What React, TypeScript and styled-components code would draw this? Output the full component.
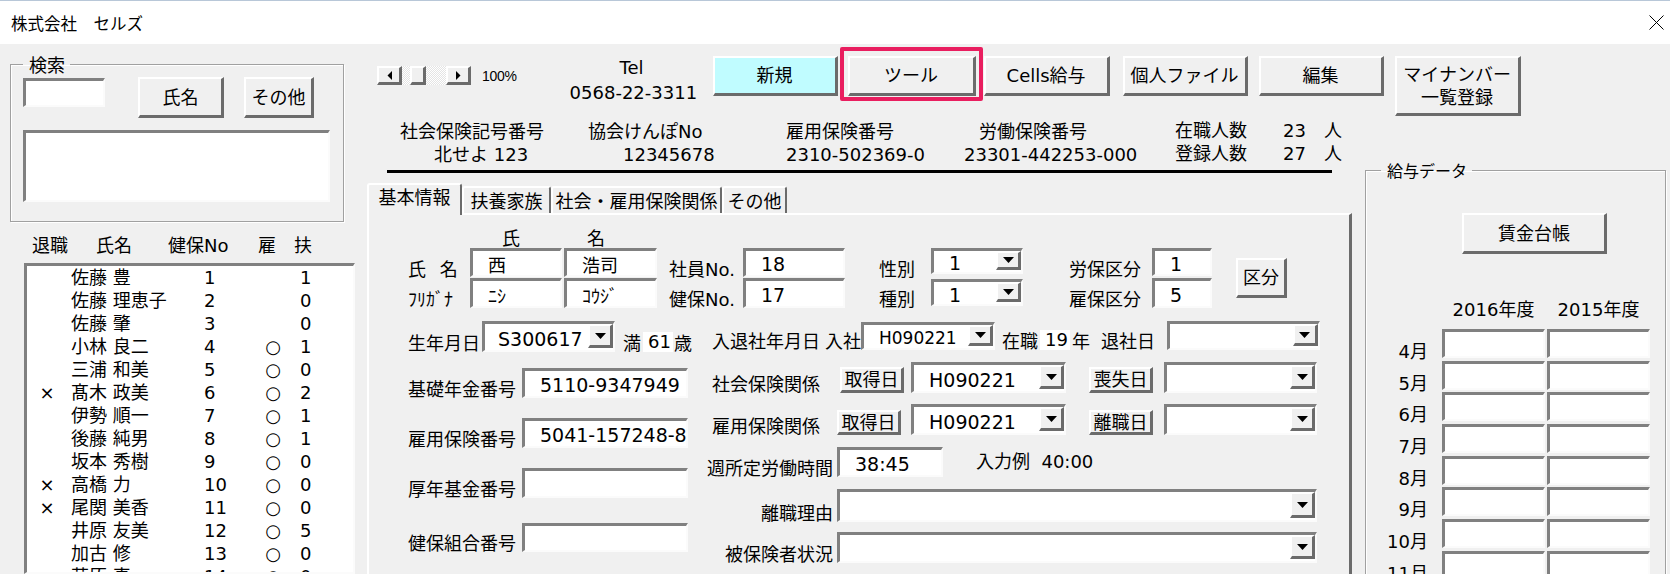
import React from 'react';
import styled, { createGlobalStyle, css } from 'styled-components';

const GlobalStyle = createGlobalStyle`
  * { box-sizing: border-box; }
  html, body { margin: 0; padding: 0; background: #f0f0f0; }
  body {
    font-family: "DejaVu Sans", "Noto Sans CJK JP", sans-serif;
    color: #000;
  }
`;

const raised = css`
  background: #f0f0f0;
  border-style: solid;
  border-width: 2px 3px 3px 2px;
  border-color: #ffffff #6b6b6b #6b6b6b #ffffff;
`;

const sunken = css`
  background: #fff;
  border-style: solid;
  border-width: 3px 2px 2px 3px;
  border-color: #808080 #fbfbfb #fbfbfb #808080;
`;

const Window = styled.div`
  width: 1670px;
  height: 574px;
  overflow: hidden;
  display: flex;
  flex-direction: column;
  background: #f0f0f0;
`;

const TitleBar = styled.header`
  flex: none;
  height: 44px;
  background: #fff;
  border-top: 1px solid #b8c7d8;
  display: flex;
  align-items: center;
  justify-content: space-between;
  padding: 0 6px 0 11px;
`;

const Title = styled.h1`
  margin: 0;
  font-family: "Noto Sans CJK JP", sans-serif;
  font-weight: 400;
  font-size: 16.5px;
  line-height: 20px;
`;

const Body = styled.div`
  flex: 1;
  display: flex;
  min-height: 0;
`;

/* ---------- left pane ---------- */

const LeftPane = styled.aside`
  flex: none;
  width: 360px;
  padding: 10px 0 0 10px;
  display: flex;
  flex-direction: column;
  min-height: 0;
`;

const GroupBox = styled.fieldset<{ $w: number }>`
  margin: 0;
  min-width: 0;
  width: ${p => p.$w}px;
  border: 1px solid #a0a0a0;
  box-shadow: inset 1px 1px 0 #fff, 1px 1px 0 #fff;
`;

const SearchGroup = styled(GroupBox)`
  flex: none;
  padding: 3px 0 19px 12px;
`;

const Legend = styled.legend<{ $size: number; $ml?: number }>`
  margin-left: ${p => p.$ml ?? 0}px;
  padding: 0 5px 0 6px;
  font-family: "Noto Sans CJK JP", sans-serif;
  font-size: ${p => p.$size}px;
  line-height: 20px;
`;

const SearchRow = styled.div`
  display: flex;
  align-items: flex-start;
`;

const Field = styled.div<{ $w: number; $h: number; $ml?: number; $mt?: number; $size?: number }>`
  ${sunken};
  flex: none;
  width: ${p => p.$w}px;
  height: ${p => p.$h}px;
  margin-left: ${p => p.$ml ?? 0}px;
  margin-top: ${p => p.$mt ?? 0}px;
  padding: 2px 0 0 15px;
  display: flex;
  align-items: center;
  font-size: ${p => p.$size ?? 19}px;
  white-space: nowrap;
  overflow: hidden;
`;

const Button = styled.button<{ $w: number; $h: number; $ml?: number; $mt?: number; $bg?: string }>`
  ${raised};
  flex: none;
  width: ${p => p.$w}px;
  height: ${p => p.$h}px;
  margin: ${p => p.$mt ?? 0}px 0 0 ${p => p.$ml ?? 0}px;
  padding: 0;
  background: ${p => p.$bg ?? '#f0f0f0'};
  font-family: inherit;
  font-size: 18px;
  line-height: 23px;
  color: #000;
  display: flex;
  flex-direction: column;
  align-items: center;
  justify-content: center;
  cursor: default;
`;

const ListHeader = styled.div`
  display: grid;
  grid-template-columns: 22px 64px 72px 90px 36px auto;
  margin-top: 13px;
  font-size: 18px;
  line-height: 22px;
`;

const ListBox = styled.div`
  ${sunken};
  flex: 1;
  width: 331px;
  margin: 6px 0 0 14px;
  overflow: hidden;
`;

const ListRow = styled.div`
  display: grid;
  grid-template-columns: 44px 133px 58px 22px auto;
  height: 23px;
  font-size: 18px;
  line-height: 23px;
  white-space: nowrap;
`;

const Mark = styled.span`
  text-align: center;
  padding-right: 4px;
`;

const Circle = styled.span`
  text-align: center;
`;

const FuCell = styled.span`
  padding-left: 16px;
`;

/* ---------- main ---------- */

const Main = styled.main`
  flex: 1;
  display: flex;
  flex-direction: column;
  min-width: 0;
`;

const Toolbar = styled.div`
  flex: none;
  height: 76px;
  display: flex;
  align-items: flex-start;
`;

const ScrollBar = styled.div`
  margin: 22px 0 0 17px;
  width: 94px;
  height: 19px;
  display: flex;
  background-image: repeating-conic-gradient(#ffffff 0 25%, #e4e4e4 0 50%);
  background-size: 2px 2px;
`;

const ScrollArrow = styled.span`
  ${raised};
  width: 25px;
  height: 19px;
  display: flex;
  align-items: center;
  justify-content: center;
`;

const ScrollTrack = styled.span`
  flex: 1;
`;

const ScrollThumb = styled.span`
  ${raised};
  display: block;
  width: 16px;
  height: 19px;
  margin-left: 8px;
`;

const ZoomText = styled.span`
  margin: 22px 0 0 11px;
  font-family: "Liberation Sans", sans-serif;
  font-size: 14px;
  line-height: 20px;
  letter-spacing: -0.3px;
`;

const TelBlock = styled.div`
  width: 124px;
  margin: 11px 0 0 53px;
  text-align: center;
  font-size: 18px;
  line-height: 25px;
  white-space: nowrap;
`;

const Highlight = styled.div`
  position: relative;
  margin: 12px 0 0 10px;
  &::after {
    content: '';
    position: absolute;
    top: -9px;
    left: -8px;
    right: -7px;
    bottom: -5px;
    border: 4px solid #e91e5f;
    border-radius: 2px;
    pointer-events: none;
  }
`;

const Lower = styled.div`
  flex: 1;
  display: flex;
  min-height: 0;
`;

const CenterCol = styled.div`
  flex: none;
  width: 992px;
  display: flex;
  flex-direction: column;
`;

const InfoRow = styled.div`
  display: flex;
  height: 46px;
  margin-left: 27px;
`;

const InfoCol = styled.div<{ $w: number }>`
  width: ${p => p.$w}px;
  display: flex;
  flex-direction: column;
`;

const InfoText = styled.div<{ $pad: number }>`
  padding-left: ${p => p.$pad}px;
  font-size: 18px;
  line-height: 23px;
  white-space: nowrap;
`;

const CountGrid = styled.div`
  margin-left: 15px;
  display: grid;
  grid-template-columns: 108px 41px auto;
  font-size: 18px;
  line-height: 21px;
  white-space: nowrap;
`;

const Rule = styled.div`
  width: 945px;
  height: 3px;
  margin: 4px 0 0 27px;
  background: #000;
`;

const TabStrip = styled.div`
  display: flex;
  align-items: flex-end;
  height: 30px;
  margin: 10px 0 0 7px;
`;

const Tab = styled.div<{ $w: number; $active?: boolean }>`
  position: relative;
  z-index: ${p => (p.$active ? 2 : 0)};
  width: ${p => p.$w}px;
  height: ${p => (p.$active ? 32 : 27)}px;
  margin-bottom: ${p => (p.$active ? -2 : 0)}px;
  padding: ${p => (p.$active ? '0 0 4px' : '3px 0 0')};
  background: #f0f0f0;
  border-style: solid;
  border-width: 2px 2px 0 2px;
  border-color: #fff #6b6b6b #fff #fff;
  border-radius: 3px 3px 0 0;
  display: flex;
  align-items: center;
  justify-content: center;
  font-size: 18px;
  line-height: 22px;
  white-space: nowrap;
`;

const Panel = styled.section`
  flex: 1;
  width: 985px;
  margin-left: 7px;
  border-style: solid;
  border-width: 2px 3px 0 2px;
  border-color: #fff #6b6b6b #fff #fff;
  padding: 14px 0 0 39px;
`;

const TopGrid = styled.div`
  display: grid;
  grid-template-columns: 62px 94px 93px 86px 102px 86px 92px 129px 60px 75px;
  grid-template-rows: 19px 30px 30px;
`;

const ColHead = styled.span<{ $pad: number }>`
  padding-left: ${p => p.$pad}px;
  font-size: 18px;
  line-height: 19px;
`;

const Label = styled.span<{ $ml?: number; $pad?: number; $w?: number; $right?: boolean }>`
  flex: none;
  margin-left: ${p => p.$ml ?? 0}px;
  margin-bottom: -3px;
  padding-left: ${p => p.$pad ?? 0}px;
  padding-right: ${p => (p.$right ? 4 : 0)}px;
  width: ${p => (p.$w ? `${p.$w}px` : 'auto')};
  text-align: ${p => (p.$right ? 'right' : 'left')};
  font-size: 18px;
  line-height: 22px;
  white-space: nowrap;
  align-self: end;
`;

const NameLabel = styled(Label)`
  word-spacing: 8px;
`;

const KubunButton = styled(Button)`
  grid-column: 10;
  grid-row: 2 / 4;
  justify-self: end;
  align-self: center;
`;

const Select = styled.div<{ $w: number; $h: number; $ml?: number; $mt?: number }>`
  ${sunken};
  flex: none;
  width: ${p => p.$w}px;
  height: ${p => p.$h}px;
  margin-left: ${p => p.$ml ?? 0}px;
  margin-top: ${p => p.$mt ?? 0}px;
  display: flex;
  align-items: flex-start;
`;

const SelectValue = styled.span<{ $size?: number; $pad?: number }>`
  flex: 1;
  align-self: center;
  padding: 3px 0 0 ${p => p.$pad ?? 15}px;
  font-size: ${p => p.$size ?? 19}px;
  line-height: 20px;
  white-space: nowrap;
  overflow: hidden;
`;

const DropButton = styled.span`
  ${raised};
  flex: none;
  width: 25px;
  height: calc(100% - 2px);
  display: flex;
  align-items: center;
  justify-content: center;
`;

const Years = styled.span`
  flex: none;
  margin-left: 2px;
  padding: 0 2px 0 5px;
  background: #fff;
  font-size: 18px;
  line-height: 20px;
`;

const LowerBlock = styled.div`
  display: flex;
  margin-top: 13px;
`;

const LeftForm = styled.div`
  flex: none;
  width: 297px;
  display: flex;
  flex-direction: column;
`;

const RightForm = styled.div`
  display: flex;
  flex-direction: column;
`;

const FormRow = styled.div<{ $mt?: number }>`
  display: flex;
  align-items: flex-end;
  margin-top: ${p => p.$mt ?? 0}px;
`;

const Note = styled.span`
  align-self: center;
  margin-left: 33px;
  font-size: 18px;
  line-height: 22px;
  white-space: pre;
`;

/* ---------- side ---------- */

const Side = styled.aside`
  flex: none;
  width: 301px;
  margin-left: 13px;
  padding-top: 40px;
`;

const PayGroup = styled(GroupBox)`
  padding: 0 0 20px 0;
`;

const YearGrid = styled.div<{ $mt: number }>`
  display: grid;
  grid-template-columns: 74px 103px 103px;
  column-gap: 2px;
  row-gap: 2.67px;
  margin-top: ${p => p.$mt}px;
`;

const YearHead = styled.span`
  text-align: center;
  font-size: 18px;
  line-height: 22px;
  white-space: nowrap;
`;

const MonthLabel = styled.span`
  align-self: end;
  margin-bottom: -5px;
  padding-right: 12px;
  text-align: right;
  font-size: 18px;
  line-height: 22px;
`;

const Cell = styled.div`
  ${sunken};
  height: 29px;
`;

/* ---------- icons ---------- */

const CloseIcon = () => (
  <svg width="15" height="15" viewBox="0 0 15 15">
    <path d="M0.5 0.5 L14.5 14.5 M14.5 0.5 L0.5 14.5" stroke="#000" strokeWidth="1" fill="none" />
  </svg>
);

const ArrowLeft = () => (
  <svg width="5" height="9" viewBox="0 0 5 9">
    <polygon points="5,0 5,9 0.5,4.5" fill="#000" />
  </svg>
);

const ArrowRight = () => (
  <svg width="5" height="9" viewBox="0 0 5 9">
    <polygon points="0,0 0,9 4.5,4.5" fill="#000" />
  </svg>
);

const ArrowDown = () => (
  <svg width="11" height="6" viewBox="0 0 11 6">
    <polygon points="0,0 11,0 5.5,6" fill="#000" />
  </svg>
);

const Dropdown: React.FC<{ w: number; h: number; ml?: number; mt?: number; value?: string; size?: number; pad?: number }> = ({
  w, h, ml, mt, value, size, pad,
}) => (
  <Select $w={w} $h={h} $ml={ml} $mt={mt}>
    <SelectValue $size={size} $pad={pad}>{value}</SelectValue>
    <DropButton><ArrowDown /></DropButton>
  </Select>
);

/* ---------- data ---------- */

const staff = [
  { x: '', name: '佐藤 豊', no: 1, koyo: '', fu: 1 },
  { x: '', name: '佐藤 理恵子', no: 2, koyo: '', fu: 0 },
  { x: '', name: '佐藤 肇', no: 3, koyo: '', fu: 0 },
  { x: '', name: '小林 良二', no: 4, koyo: '○', fu: 1 },
  { x: '', name: '三浦 和美', no: 5, koyo: '○', fu: 0 },
  { x: '×', name: '髙木 政美', no: 6, koyo: '○', fu: 2 },
  { x: '', name: '伊勢 順一', no: 7, koyo: '○', fu: 1 },
  { x: '', name: '後藤 純男', no: 8, koyo: '○', fu: 1 },
  { x: '', name: '坂本 秀樹', no: 9, koyo: '○', fu: 0 },
  { x: '×', name: '高橋 力', no: 10, koyo: '○', fu: 0 },
  { x: '×', name: '尾関 美香', no: 11, koyo: '○', fu: 0 },
  { x: '', name: '井原 友美', no: 12, koyo: '○', fu: 5 },
  { x: '', name: '加古 修', no: 13, koyo: '○', fu: 0 },
  { x: '', name: '荻原 真', no: 14, koyo: '○', fu: 0 },
];

const months = ['4月', '5月', '6月', '7月', '8月', '9月', '10月', '11月', '12月', '1月', '2月', '3月'];

export default function App() {
  return (
    <Window>
      <GlobalStyle />
      <TitleBar>
        <Title>株式会社　セルズ</Title>
        <CloseIcon />
      </TitleBar>

      <Body>
        <LeftPane>
          <SearchGroup $w={334}>
            <Legend $size={18}>検索</Legend>
            <SearchRow>
              <Field $w={82} $h={29} $mt={1} />
              <Button $w={86} $h={41} $ml={33}>氏名</Button>
              <Button $w={70} $h={41} $ml={20}>その他</Button>
            </SearchRow>
            <Field $w={307} $h={72} $mt={12} />
          </SearchGroup>

          <ListHeader>
            <span />
            <span>退職</span>
            <span>氏名</span>
            <span>健保No</span>
            <span>雇</span>
            <span>扶</span>
          </ListHeader>
          <ListBox>
            {staff.map(s => (
              <ListRow key={s.no}>
                <Mark>{s.x}</Mark>
                <span>{s.name}</span>
                <span>{s.no}</span>
                <Circle>{s.koyo}</Circle>
                <FuCell>{s.fu}</FuCell>
              </ListRow>
            ))}
          </ListBox>
        </LeftPane>

        <Main>
          <Toolbar>
            <ScrollBar>
              <ScrollArrow><ArrowLeft /></ScrollArrow>
              <ScrollTrack><ScrollThumb /></ScrollTrack>
              <ScrollArrow><ArrowRight /></ScrollArrow>
            </ScrollBar>
            <ZoomText>100%</ZoomText>
            <TelBlock>
              <div>Tel</div>
              <div>0568-22-3311</div>
            </TelBlock>
            <Button $w={125} $h={40} $ml={19} $mt={12} $bg="#c0fcff">新規</Button>
            <Highlight>
              <Button $w={128} $h={40}>ツール</Button>
            </Highlight>
            <Button $w={126} $h={40} $ml={8} $mt={12}>Cells給与</Button>
            <Button $w={125} $h={40} $ml={13} $mt={12}>個人ファイル</Button>
            <Button $w={125} $h={40} $ml={11} $mt={12}>編集</Button>
            <Button $w={126} $h={60} $ml={11} $mt={12}>
              <span>マイナンバー</span>
              <span>一覧登録</span>
            </Button>
          </Toolbar>

          <Lower>
            <CenterCol>
              <InfoRow>
                <InfoCol $w={173}>
                  <InfoText $pad={13}>社会保険記号番号</InfoText>
                  <InfoText $pad={47}>北せよ 123</InfoText>
                </InfoCol>
                <InfoCol $w={200}>
                  <InfoText $pad={28}>協会けんぽNo</InfoText>
                  <InfoText $pad={63}>12345678</InfoText>
                </InfoCol>
                <InfoCol $w={190}>
                  <InfoText $pad={26}>雇用保険番号</InfoText>
                  <InfoText $pad={26}>2310-502369-0</InfoText>
                </InfoCol>
                <InfoCol $w={210}>
                  <InfoText $pad={29}>労働保険番号</InfoText>
                  <InfoText $pad={14}>23301-442253-000</InfoText>
                </InfoCol>
                <CountGrid>
                  <span>在職人数</span><span>23</span><span>人</span>
                  <span>登録人数</span><span>27</span><span>人</span>
                </CountGrid>
              </InfoRow>
              <Rule />

              <TabStrip>
                <Tab $w={95} $active>基本情報</Tab>
                <Tab $w={89}>扶養家族</Tab>
                <Tab $w={171}>社会・雇用保険関係</Tab>
                <Tab $w={65}>その他</Tab>
              </TabStrip>

              <Panel>
                <TopGrid>
                  <span />
                  <ColHead $pad={32}>氏</ColHead>
                  <ColHead $pad={23}>名</ColHead>
                  <span /><span /><span /><span /><span /><span /><span />

                  <NameLabel>氏 名</NameLabel>
                  <Field $w={92} $h={29} $size={18}>西</Field>
                  <Field $w={93} $h={29} $size={18}>浩司</Field>
                  <Label $pad={12}>社員No.</Label>
                  <Field $w={102} $h={29}>18</Field>
                  <Label $pad={34}>性別</Label>
                  <Dropdown w={92} h={26} value="1" />
                  <Label $pad={46}>労保区分</Label>
                  <Field $w={60} $h={28}>1</Field>
                  <KubunButton $w={51} $h={40}>区分</KubunButton>

                  <Label>ﾌﾘｶﾞﾅ</Label>
                  <Field $w={92} $h={30} $size={18}>ﾆｼ</Field>
                  <Field $w={93} $h={30} $size={18}>ｺｳｼﾞ</Field>
                  <Label $pad={12}>健保No.</Label>
                  <Field $w={102} $h={30}>17</Field>
                  <Label $pad={34}>種別</Label>
                  <Dropdown w={92} h={27} mt={1} value="1" />
                  <Label $pad={46}>雇保区分</Label>
                  <Field $w={60} $h={30}>5</Field>
                </TopGrid>

                <LowerBlock>
                  <LeftForm>
                    <FormRow>
                      <Label>生年月日</Label>
                      <Dropdown w={133} h={31} ml={2} value="S300617" pad={13} />
                      <Label $ml={8}>満</Label>
                      <Years>61</Years>
                      <Label $ml={1}>歳</Label>
                    </FormRow>
                    <FormRow $mt={16}>
                      <Label $w={114}>基礎年金番号</Label>
                      <Field $w={166} $h={30}>5110-9347949</Field>
                    </FormRow>
                    <FormRow $mt={20}>
                      <Label $w={114}>雇用保険番号</Label>
                      <Field $w={166} $h={30}>5041-157248-8</Field>
                    </FormRow>
                    <FormRow $mt={20}>
                      <Label $w={114}>厚年基金番号</Label>
                      <Field $w={166} $h={30} />
                    </FormRow>
                    <FormRow $mt={25}>
                      <Label $w={114}>健保組合番号</Label>
                      <Field $w={166} $h={29} />
                    </FormRow>
                  </LeftForm>

                  <RightForm>
                    <FormRow>
                      <Label $ml={7}>入退社年月日</Label>
                      <Label $ml={5}>入社</Label>
                      <Dropdown w={134} h={28} value="H090221" size={17} />
                      <Label $ml={7}>在職</Label>
                      <Years>19</Years>
                      <Label $ml={2}>年</Label>
                      <Label $ml={11}>退社日</Label>
                      <Dropdown w={153} h={29} ml={12} />
                    </FormRow>
                    <FormRow $mt={12}>
                      <Label $w={132} $pad={7}>社会保険関係</Label>
                      <Button $w={64} $h={26} $ml={3}>取得日</Button>
                      <Dropdown w={155} h={31} ml={7} value="H090221" />
                      <Button $w={64} $h={26} $ml={23}>喪失日</Button>
                      <Dropdown w={153} h={31} ml={11} />
                    </FormRow>
                    <FormRow $mt={11}>
                      <Label $w={132} $pad={7}>雇用保険関係</Label>
                      <Button $w={64} $h={25}>取得日</Button>
                      <Dropdown w={155} h={31} ml={10} value="H090221" />
                      <Button $w={64} $h={25} $ml={23}>離職日</Button>
                      <Dropdown w={153} h={31} ml={11} />
                    </FormRow>
                    <FormRow $mt={12}>
                      <Label $w={132} $right>週所定労働時間</Label>
                      <Field $w={106} $h={30}>38:45</Field>
                      <Note>{'入力例  40:00'}</Note>
                    </FormRow>
                    <FormRow $mt={12}>
                      <Label $w={132} $right>離職理由</Label>
                      <Dropdown w={480} h={33} />
                    </FormRow>
                    <FormRow $mt={10}>
                      <Label $w={132} $right>被保険者状況</Label>
                      <Dropdown w={480} h={31} />
                    </FormRow>
                  </RightForm>
                </LowerBlock>
              </Panel>
            </CenterCol>

            <Side>
              <PayGroup $w={301}>
                <Legend $size={16} $ml={15}>給与データ</Legend>
                <Button $w={145} $h={41} $ml={96} $mt={33}>賃金台帳</Button>
                <YearGrid $mt={45}>
                  <span />
                  <YearHead>2016年度</YearHead>
                  <YearHead>2015年度</YearHead>
                </YearGrid>
                <YearGrid $mt={8}>
                  {months.map(m => (
                    <React.Fragment key={m}>
                      <MonthLabel>{m}</MonthLabel>
                      <Cell />
                      <Cell />
                    </React.Fragment>
                  ))}
                </YearGrid>
              </PayGroup>
            </Side>
          </Lower>
        </Main>
      </Body>
    </Window>
  );
}
